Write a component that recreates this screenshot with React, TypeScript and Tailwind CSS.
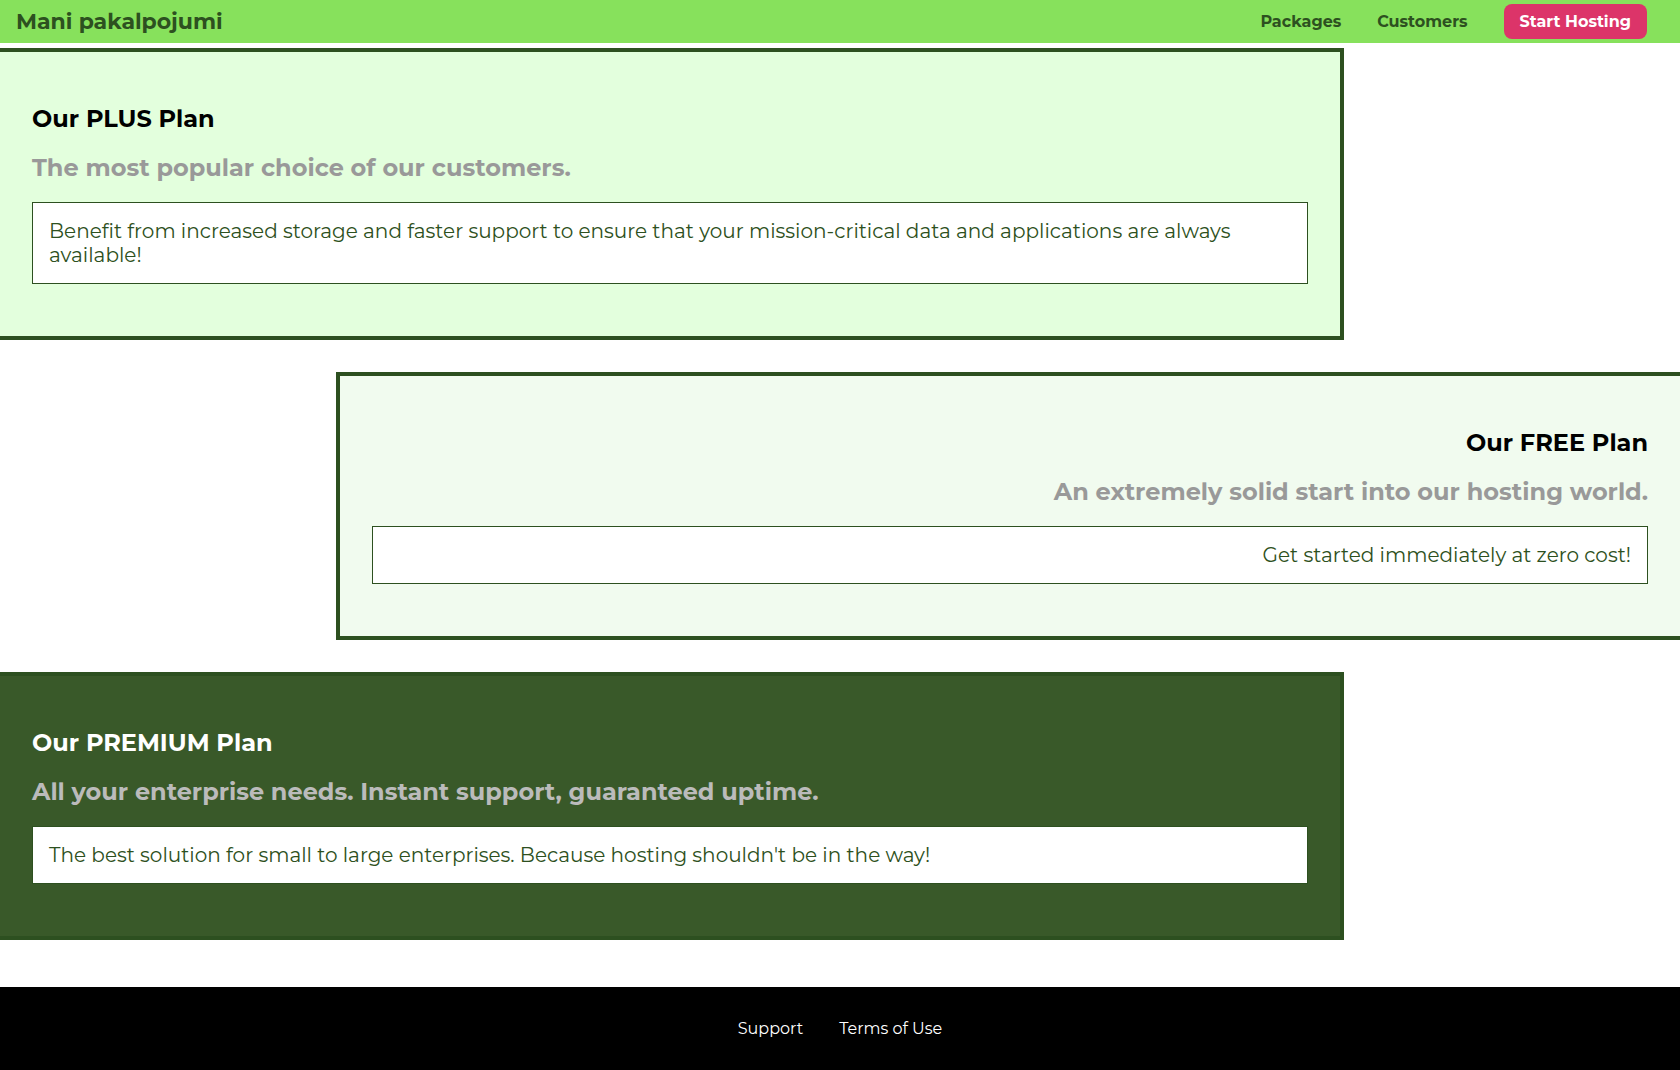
type Plan = {
  title: string;
  subtitle: string;
  text: string;
  section: string;
  titleColor: string;
  subtitleColor: string;
};

const plans: Plan[] = [
  {
    title: "Our PLUS Plan",
    subtitle: "The most popular choice of our customers.",
    text: "Benefit from increased storage and faster support to ensure that your mission-critical data and applications are always available!",
    section: "border-r-4 bg-[#e3ffdd]",
    titleColor: "text-black",
    subtitleColor: "text-[#999999]",
  },
  {
    title: "Our FREE Plan",
    subtitle: "An extremely solid start into our hosting world.",
    text: "Get started immediately at zero cost!",
    section: "ml-auto border-l-4 bg-[#f1fbef] text-right",
    titleColor: "text-black",
    subtitleColor: "text-[#999999]",
  },
  {
    title: "Our PREMIUM Plan",
    subtitle: "All your enterprise needs. Instant support, guaranteed uptime.",
    text: "The best solution for small to large enterprises. Because hosting shouldn't be in the way!",
    section: "border-r-4 bg-[#395929]",
    titleColor: "text-white",
    subtitleColor: "text-[#bbbbbb]",
  },
];

function PlanSection({ plan }: { plan: Plan }) {
  return (
    <section className={`w-4/5 border-y-4 border-[#2d5020] px-8 py-[52px] ${plan.section}`}>
      <h1 className={`text-[24px] leading-[29px] font-bold ${plan.titleColor}`}>{plan.title}</h1>
      <h2 className={`mt-5 text-[24px] leading-[29px] font-bold ${plan.subtitleColor}`}>{plan.subtitle}</h2>
      <p className="mt-5 border border-[#2d5020] bg-white p-4 text-[20px] leading-6 text-[#2d5020]">{plan.text}</p>
    </section>
  );
}

export default function App() {
  return (
    <div className="flex min-h-screen flex-col bg-white font-['Montserrat','Inter',sans-serif]">
      <header className="flex items-center justify-between bg-[#87e15c] py-1 pr-[33px] pl-4 font-bold text-[#2d5020]">
        <a href="#home" className="text-[22px] leading-[27px]">
          Mani pakalpojumi
        </a>
        <nav aria-label="Main">
          <ul className="flex items-center gap-9 text-[16px] leading-[19px]">
            <li>
              <a href="#packages">Packages</a>
            </li>
            <li>
              <a href="#customers">Customers</a>
            </li>
            <li>
              <a href="#start" className="block rounded-lg bg-[#dc3469] px-4 py-2 text-white">
                Start Hosting
              </a>
            </li>
          </ul>
        </nav>
      </header>
      <main className="mt-[5px] mb-[47px] flex flex-col gap-8">
        {plans.map((plan) => (
          <PlanSection key={plan.title} plan={plan} />
        ))}
      </main>
      <footer className="grow bg-black py-8 text-white">
        <ul className="flex justify-center gap-9 text-[16px] leading-[19px]">
          <li>
            <a href="#support">Support</a>
          </li>
          <li>
            <a href="#terms">Terms of Use</a>
          </li>
        </ul>
      </footer>
    </div>
  );
}
